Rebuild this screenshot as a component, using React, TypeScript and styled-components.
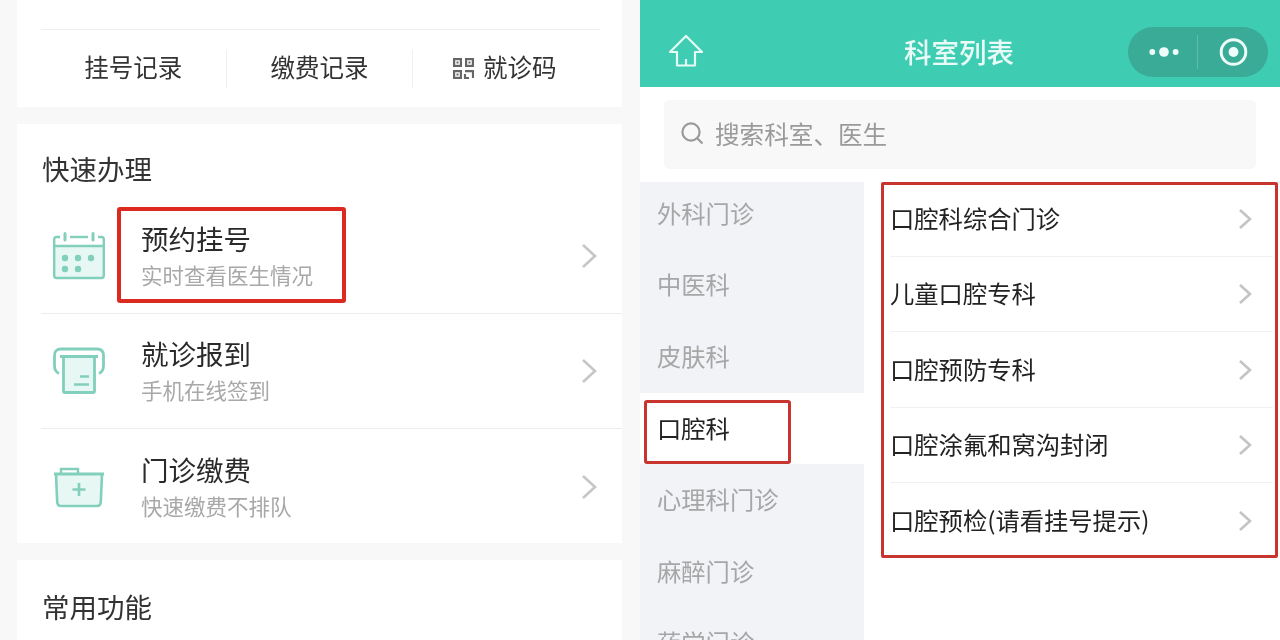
import React from "react";
import styled, { createGlobalStyle } from "styled-components";

const Global = createGlobalStyle`
  html, body { margin: 0; padding: 0; background: #fff; }
  * { box-sizing: border-box; }
  body { font-family: "Noto Sans CJK SC", "Noto Sans", sans-serif; }
`;

const Page = styled.div`
  display: flex;
  width: 1280px;
  height: 640px;
  overflow: hidden;
  filter: blur(0.4px);
`;

const LeftPanel = styled.section`
  width: 640px;
  height: 640px;
  overflow: hidden;
  background: #f8f8f8;
  padding: 0 18px 0 17px;
  display: flex;
  flex-direction: column;
  gap: 17px;
  flex: none;
`;

const Card = styled.div`
  background: #fff;
  flex: none;
`;

const TopCard = styled(Card)`
  height: 107px;
  padding: 29px 22px 0 24px;
`;

const TabRow = styled.div`
  display: flex;
  align-items: center;
  height: 78px;
  border-top: 1px solid #efefef;
`;

const Tab = styled.div<{ $w: number; $sep?: boolean; $shift?: boolean }>`
  width: ${(p) => p.$w}px;
  height: 38px;
  display: flex;
  align-items: center;
  justify-content: center;
  gap: 9px;
  font-size: 24.5px;
  line-height: 34px;
  color: #333;
  padding: 0 ${(p) => (p.$shift ? 4 : 0)}px 4px 0;
  border-right: ${(p) => (p.$sep ? "1px solid #f0f0f0" : "none")};
`;

const QrGlyph = styled.svg`
  flex: none;
  margin-top: 4px;
`;

const QuickCard = styled(Card)`
  height: 419px;
  padding-left: 24px;
`;

const BottomCard = styled(Card)`
  height: 100px;
  padding: 2px 0 0 24px;
`;

const CardTitle = styled.h2`
  margin: 0 0 0 1px;
  padding-top: 26px;
  height: 75px;
  font-size: 27.5px;
  line-height: 36px;
  font-weight: 400;
  color: #333;
`;

const Row = styled.div<{ $line?: boolean }>`
  position: relative;
  height: 115px;
  display: flex;
  align-items: center;
  border-bottom: ${(p) => (p.$line ? "1px solid #ececec" : "none")};
  padding-left: 12px;
`;

const RowIcon = styled.svg`
  width: 52px;
  height: 52px;
  flex: none;
  margin-right: 36px;
`;

const RowText = styled.div`
  flex: 1;
  display: flex;
  flex-direction: column;
  gap: 7px;
  margin-top: 1px;
`;

const RowTitle = styled.div`
  font-size: 27.5px;
  line-height: 30px;
  color: #2a2a2a;
`;

const RowSub = styled.div`
  font-size: 21.5px;
  line-height: 30px;
  color: #a8a8a8;
`;

const ChevronLeft = styled.svg`
  width: 16px;
  height: 26px;
  flex: none;
  margin-right: 25px;
`;

const RedFrame = styled.div`
  position: absolute;
  left: 76px;
  top: 8px;
  width: 229px;
  height: 96px;
  border: 4px solid #dd2a20;
  border-radius: 3px;
`;

const RightPanel = styled.section`
  width: 640px;
  height: 640px;
  overflow: hidden;
  background: #fff;
  flex: none;
`;

const NavBar = styled.header`
  position: relative;
  height: 87px;
  background: #3ecdb3;
  display: flex;
  align-items: center;
  justify-content: center;
  padding-top: 14px;
`;

const NavTitle = styled.h1`
  margin: 0 0 0 -2px;
  font-size: 27.5px;
  font-weight: 500;
  color: #e8fbf6;
  line-height: 36px;
`;

const HomeIcon = styled.svg`
  position: absolute;
  left: 28px;
  top: 34px;
  width: 36px;
  height: 34px;
`;

const Capsule = styled.div`
  position: absolute;
  left: 488px;
  top: 27px;
  width: 140px;
  height: 50px;
  border-radius: 25px;
  background: #39ab97;
  display: flex;
  align-items: center;
`;

const CapsuleSide = styled.svg<{ $sep?: boolean }>`
  width: 71px;
  height: 34px;
  border-right: ${(p) => (p.$sep ? "1px solid #5dbcab" : "none")};
`;

const SearchWrap = styled.div`
  height: 95px;
  padding: 13px 24px;
`;

const SearchBox = styled.div`
  height: 69px;
  background: #f8f8f8;
  border-radius: 5px;
  display: flex;
  align-items: center;
  gap: 11px;
  padding: 0 0 3px 16px;
  font-size: 24.6px;
  color: #9a9a9a;
`;

const Body = styled.div`
  display: flex;
  height: 458px;
`;

const Sidebar = styled.nav`
  width: 224px;
  height: 458px;
  overflow: hidden;
  background: #f2f3f7;
  flex: none;
`;

const SideList = styled.div`
  margin-top: -4px;
`;

const SideItem = styled.div<{ $active?: boolean }>`
  position: relative;
  height: 71.6px;
  display: flex;
  align-items: center;
  padding: 0 0 3px 17px;
  font-size: 24.3px;
  color: ${(p) => (p.$active ? "#222" : "#a6a6a6")};
  background: ${(p) => (p.$active ? "#fff" : "transparent")};
`;

const SideFrame = styled.div`
  position: absolute;
  left: 4px;
  top: 7px;
  width: 147px;
  height: 64px;
  border: 3px solid #c8352e;
  border-radius: 3px;
`;

const DeptBox = styled.div`
  margin-left: 17px;
  width: 397px;
  height: 376px;
  border: 3px solid #c8352e;
  border-radius: 2px;
  padding-left: 6px;
`;

const DeptList = styled.div`
  margin-top: -4px;
`;

const DeptRow = styled.div<{ $line?: boolean }>`
  height: 75.5px;
  display: flex;
  align-items: center;
  justify-content: space-between;
  padding: 0 21px 2px 0;
  font-size: 24.3px;
  color: #222;
  border-bottom: ${(p) => (p.$line ? "1px solid #f0f0f0" : "none")};
  margin-right: 2px;
`;

const ChevronSmall = styled.svg`
  width: 14px;
  height: 22px;
  flex: none;
  margin-top: 3px;
`;

const Chevron = () => (
  <ChevronLeft viewBox="0 0 16 26">
    <path d="M2 2 L14 13 L2 24" fill="none" stroke="#c6c6c6" strokeWidth="2.6" />
  </ChevronLeft>
);

const ChevSm = () => (
  <ChevronSmall viewBox="0 0 14 22">
    <path d="M2 2 L12 11 L2 20" fill="none" stroke="#c4c4c4" strokeWidth="2.6" />
  </ChevronSmall>
);

const TEAL = "#82cfbc";
const TINT = "#e6f7f4";

const CalendarIcon = () => (
  <RowIcon viewBox="0 0 52 52" fill="none">
    <rect x="1.2" y="15" width="49.6" height="33" fill={TINT} />
    <path d="M7 7 H3.5 Q1.2 7 1.2 9.5 V45.5 Q1.2 48 3.5 48 H48.5 Q50.8 48 50.8 45.5 V9.5 Q50.8 7 48.5 7 H45" stroke={TEAL} strokeWidth="2.4" />
    <path d="M17 7 H35" stroke={TEAL} strokeWidth="2.4" />
    <path d="M12 3.5 V10 M40 3.5 V10" stroke={TEAL} strokeWidth="3" strokeLinecap="round" />
    <path d="M1.2 16 H50.8" stroke={TEAL} strokeWidth="2.4" />
    <g fill={TEAL}>
      <circle cx="12" cy="28" r="3.2" />
      <circle cx="25" cy="28" r="3.2" />
      <circle cx="38" cy="28" r="3.2" />
      <circle cx="12" cy="39" r="3.2" />
      <circle cx="25" cy="39" r="3.2" />
    </g>
  </RowIcon>
);

const ReceiptIcon = () => (
  <RowIcon viewBox="0 1.5 52 52" fill="none">
    <path d="M6 30 Q1.5 28 1.5 22 V12 Q1.5 5.5 8 5.5 H44 Q50.5 5.5 50.5 12 V22 Q50.5 28 46 30" stroke={TEAL} strokeWidth="2.8" />
    <rect x="10.5" y="13" width="31" height="36" rx="1.5" fill={TINT} stroke={TEAL} strokeWidth="2.8" />
    <path d="M7 13 H45" stroke={TEAL} strokeWidth="3.2" />
    <path d="M27 33 H36 M21 41 H36" stroke={TEAL} strokeWidth="2.4" />
  </RowIcon>
);

const BoxIcon = () => (
  <RowIcon viewBox="0 0 52 52" fill="none">
    <path d="M8 13 V8 H25 V13" stroke={TEAL} strokeWidth="2.4" />
    <path d="M3 13 H49 L47.5 42 Q47.3 45 44 45 H8 Q4.7 45 4.5 42 Z" fill={TINT} />
    <path d="M1 13 H51" stroke={TEAL} strokeWidth="2.8" />
    <path d="M3 13 L4.2 41 Q4.4 45 8 45 H44 Q47.6 45 47.8 41 L49 13" stroke={TEAL} strokeWidth="2.6" />
    <path d="M26 22 V35 M19.5 28.5 H32.5" stroke={TEAL} strokeWidth="2.6" />
  </RowIcon>
);

const QrIcon = () => (
  <QrGlyph width="21" height="21" viewBox="0 0 21 21" fill="none" stroke="#666" strokeWidth="2.2">
    <rect x="1.1" y="1.1" width="6.8" height="6.8" />
    <rect x="13.1" y="1.1" width="6.8" height="6.8" />
    <rect x="1.1" y="13.1" width="6.8" height="6.8" />
    <path d="M12 13.1 H20 V20 M12 16 V20 H16" />
    <path d="M3.5 4.5 H5.5 M15.5 4.5 H17.5 M3.5 16.5 H5.5" strokeWidth="2" />
  </QrGlyph>
);

const depts = ["口腔科综合门诊", "儿童口腔专科", "口腔预防专科", "口腔涂氟和窝沟封闭", "口腔预检(请看挂号提示)"];
const sides = ["外科门诊", "中医科", "皮肤科", "口腔科", "心理科门诊", "麻醉门诊", "药学门诊"];

export default function App() {
  return (
    <Page>
      <Global />
      <LeftPanel>
        <TopCard>
          <TabRow>
            <Tab $w={186} $sep>挂号记录</Tab>
            <Tab $w={187} $sep>缴费记录</Tab>
            <Tab $w={187} $shift><QrIcon />就诊码</Tab>
          </TabRow>
        </TopCard>
        <QuickCard>
          <CardTitle>快速办理</CardTitle>
          <Row $line>
            <CalendarIcon />
            <RowText>
              <RowTitle>预约挂号</RowTitle>
              <RowSub>实时查看医生情况</RowSub>
            </RowText>
            <Chevron />
            <RedFrame />
          </Row>
          <Row $line>
            <ReceiptIcon />
            <RowText>
              <RowTitle>就诊报到</RowTitle>
              <RowSub>手机在线签到</RowSub>
            </RowText>
            <Chevron />
          </Row>
          <Row>
            <BoxIcon />
            <RowText>
              <RowTitle>门诊缴费</RowTitle>
              <RowSub>快速缴费不排队</RowSub>
            </RowText>
            <Chevron />
          </Row>
        </QuickCard>
        <BottomCard>
          <CardTitle>常用功能</CardTitle>
        </BottomCard>
      </LeftPanel>
      <RightPanel>
        <NavBar>
          <HomeIcon viewBox="0 0 36 34" fill="none">
            <path d="M18 2 L34 18 H27 V31.5 H9 V18 H2 Z" stroke="#e6fbf6" strokeWidth="2.2" strokeLinejoin="round" />
            <path d="M18 25 V31" stroke="#e6fbf6" strokeWidth="2.2" />
          </HomeIcon>
          <NavTitle>科室列表</NavTitle>
          <Capsule>
            <CapsuleSide $sep viewBox="0 0 71 34">
              <circle cx="25" cy="17" r="3" fill="#eefcf9" />
              <circle cx="37" cy="17" r="5" fill="#eefcf9" />
              <circle cx="49" cy="17" r="3" fill="#eefcf9" />
            </CapsuleSide>
            <CapsuleSide viewBox="0 0 71 34">
              <circle cx="36" cy="17" r="12.5" fill="none" stroke="#eefcf9" strokeWidth="3" />
              <circle cx="36" cy="17" r="5" fill="#eefcf9" />
            </CapsuleSide>
          </Capsule>
        </NavBar>
        <SearchWrap>
          <SearchBox>
            <svg width="24" height="24" viewBox="0 0 24 24" fill="none" stroke="#9a9a9a" strokeWidth="2.2">
              <circle cx="11" cy="11" r="8.6" />
              <path d="M17 17 L22.5 22.5" />
            </svg>
            搜索科室、医生
          </SearchBox>
        </SearchWrap>
        <Body>
          <Sidebar>
            <SideList>
              {sides.map((s) => (
                <SideItem key={s} $active={s === "口腔科"}>
                  {s}
                  {s === "口腔科" && <SideFrame />}
                </SideItem>
              ))}
            </SideList>
          </Sidebar>
          <DeptBox>
            <DeptList>
              {depts.map((d, i) => (
                <DeptRow key={d} $line={i < depts.length - 1}>
                  {d}
                  <ChevSm />
                </DeptRow>
              ))}
            </DeptList>
          </DeptBox>
        </Body>
      </RightPanel>
    </Page>
  );
}
